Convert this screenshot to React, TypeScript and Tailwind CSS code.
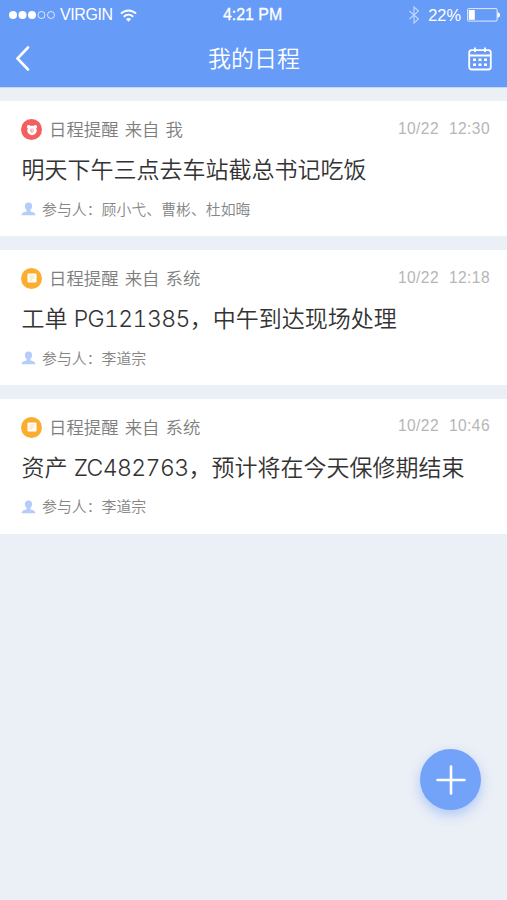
import clsx from 'clsx';

type Schedule = {
  id: number;
  kind: 'alarm' | 'order';
  from: string;
  date: string;
  time: string;
  title: string;
  code?: string;
  detail?: string;
  members: string;
};

const schedules: Schedule[] = [
  {
    id: 1,
    kind: 'alarm',
    from: '我',
    date: '10/22',
    time: '12:30',
    title: '明天下午三点去车站截总书记吃饭',
    members: '顾小弋、曹彬、杜如晦',
  },
  {
    id: 2,
    kind: 'order',
    from: '系统',
    date: '10/22',
    time: '12:18',
    title: '工单 ',
    code: 'PG121385',
    detail: '，中午到达现场处理',
    members: '李道宗',
  },
  {
    id: 3,
    kind: 'order',
    from: '系统',
    date: '10/22',
    time: '10:46',
    title: '资产 ',
    code: 'ZC482763',
    detail: '，预计将在今天保修期结束',
    members: '李道宗',
  },
];

function StatusBar() {
  return (
    <div className="relative flex h-[30px] items-center justify-between pl-[9px] pr-[7px] font-['Liberation_Sans',sans-serif] text-[16px]">
      <div className="flex items-center">
        <svg width="47" height="10" viewBox="0 0 47 10" fill="#fff">
          <circle cx="4" cy="5" r="4" />
          <circle cx="13.5" cy="5" r="4" />
          <circle cx="23" cy="5" r="4" />
          <g fill="none" stroke="#fff" strokeOpacity="0.75">
            <circle cx="32.5" cy="5" r="3.5" />
            <circle cx="42" cy="5" r="3.5" />
          </g>
        </svg>
        <span className="ml-1 w-[54px] whitespace-nowrap text-[16px] tracking-[-0.4px]">VIRGIN</span>
        <svg className="ml-[6px]" width="17" height="13" viewBox="0 0 18 13" fill="none" stroke="#fff" strokeWidth="2">
          <path d="M1 4.6C5.5 0 12.5 0 17 4.6" />
          <path d="M4 7.8C7 5 11 5 14 7.8" />
          <path d="M6.2 10.3C8 8.9 10 8.9 11.8 10.3L9 13z" fill="#fff" stroke="none" />
        </svg>
      </div>
      <span className="absolute left-[223px] top-[6px] text-[15.9px] leading-[18px] [-webkit-text-stroke:0.3px_white]">
        4:21 PM
      </span>
      <div className="flex items-center">
        <svg width="12" height="18" viewBox="0 0 12 18" fill="none" stroke="#fff" strokeOpacity="0.6" strokeWidth="1.1">
          <path d="M1.5 5L10.5 13L6 17V1L10.5 5L1.5 13" />
        </svg>
        <span className="ml-[8px] text-[16.4px]">22%</span>
        <svg className="ml-[6px]" width="33" height="14" viewBox="0 0 33 14">
          <rect x="0.6" y="0.6" width="29.5" height="12.5" rx="1" fill="none" stroke="#fff" strokeOpacity="0.8" />
          <rect x="1.8" y="2" width="6" height="9.8" fill="#fff" />
          <path d="M30.5 4C34 5.5 34 8.5 30.5 10z" fill="#fff" />
        </svg>
      </div>
    </div>
  );
}

function CalendarIcon() {
  return (
    <svg width="24" height="24" viewBox="0 0 24 24" fill="none" stroke="#fff" strokeWidth="1.8">
      <rect x="1.2" y="3.2" width="21.6" height="19.3" rx="2.5" />
      <path d="M1.2 8.5H22.8M7 0.5V5M17 0.5V5" />
      <g fill="#fff" stroke="none">
        <path d="M5 11.5h3v2.5h-3zM10.5 11.5h3v2.5h-3zM16 11.5h3v2.5h-3z" />
        <path d="M5 16.5h3v2.5h-3zM10.5 16.5h3v2.5h-3zM16 16.5h3v2.5h-3z" />
      </g>
    </svg>
  );
}

function KindIcon({ kind }: { kind: Schedule['kind'] }) {
  return (
    <div
      className={clsx(
        'flex size-[21px] items-center justify-center rounded-full',
        kind === 'alarm' ? 'bg-[#f45e5f]' : 'bg-[#fbad30]',
      )}
    >
      {kind === 'alarm' ? (
        <svg width="12" height="12" viewBox="0 0 12 12">
          <circle cx="6" cy="6.5" r="4.7" fill="#fff" />
          <circle cx="2.8" cy="2.8" r="1.9" fill="#fff" />
          <circle cx="9.2" cy="2.8" r="1.9" fill="#fff" />
          <circle cx="6" cy="6.5" r="1.9" fill="#f9a5a2" />
          <path d="M6 5V6.7H7.5" fill="none" stroke="#fff" strokeWidth="0.8" />
        </svg>
      ) : (
        <svg width="10" height="10" viewBox="0 0 10 10">
          <rect x="0.5" y="0.5" width="9" height="9" rx="1" fill="#fff" />
          <path d="M2.5 3H7.5M2.5 5H7.5M2.5 7H5" stroke="#fcd08a" strokeWidth="0.8" />
        </svg>
      )}
    </div>
  );
}

function ScheduleCard({ item }: { item: Schedule }) {
  return (
    <div className="h-[135px] bg-white pl-[21px] pr-[17px] pt-[16px]">
      <div className="flex h-[25px] items-center">
        <KindIcon kind={item.kind} />
        <span className="ml-[7px] mt-px text-[17.4px] [word-spacing:1.2px] text-[#7d7d7d]">
          日程提醒 来自 {item.from}
        </span>
        <span className="ml-auto flex gap-[10px] pb-[2px] font-['Liberation_Sans',sans-serif] text-[15.6px] tracking-[0.4px] text-[#b6b6b6]">
          <span>{item.date}</span>
          <span>{item.time}</span>
        </span>
      </div>
      <div className="mt-[10px] h-[36px] whitespace-nowrap pl-[0.5px] text-[23px] leading-[37px] tabular-nums text-[#333]">
        {item.title}
        {item.code && <span className="tracking-[-0.6px]">{item.code}</span>}
        {item.detail}
      </div>
      <div className="mt-[11px] flex h-[22px] items-center">
        <svg className="mb-[2px]" width="15" height="14" viewBox="0 0 14 14" preserveAspectRatio="none" fill="#b5cdfb">
          <path d="M7 .5C4.8 .5 3.5 2 3.6 4.2C3.7 6.2 4.6 7.3 5.3 8V9.2C4.5 10 .5 10 .5 13.3H13.5C13.5 10 9.5 10 8.7 9.2V8C9.4 7.3 10.3 6.2 10.4 4.2C10.5 2 9.2 .5 7 .5z" />
        </svg>
        <span className="ml-[6px] text-[14.9px] text-[#858585]">参与人：{item.members}</span>
      </div>
    </div>
  );
}

export default function App() {
  return (
    <div className="relative flex h-[900px] w-[507px] flex-col overflow-hidden bg-[#ebeff6] font-['Inter','Noto_Sans_CJK_SC',sans-serif] font-[350]">
      <header className="h-[88px] border-b border-[#c5d9fb] bg-[#679bf8] text-white">
        <StatusBar />
        <div className="flex h-[57px] items-center justify-between px-[15px]">
          <svg width="16" height="26" viewBox="0 0 16 26" fill="none" stroke="#fff" strokeWidth="2.6" strokeLinecap="round">
            <path d="M13 1.5L2.5 12.5L13 23.5" />
          </svg>
          <h1 className="ml-[9px] mt-[2px] text-[23px] leading-none">我的日程</h1>
          <CalendarIcon />
        </div>
      </header>

      <main className="flex flex-col gap-[13.8px] pt-[13px]">
        {schedules.map((item) => (
          <ScheduleCard key={item.id} item={item} />
        ))}
      </main>

      {/* Floating add button */}
      <button className="absolute left-[420px] top-[749px] flex size-[61px] items-center justify-center rounded-full bg-[#72a3f8] shadow-[0_5px_12px_rgba(103,155,248,0.45)]">
        <svg width="30" height="30" viewBox="0 0 30 30" stroke="#fff" strokeWidth="2.6" strokeLinecap="round">
          <path d="M1.5 15H28.5M15 1.5V28.5" />
        </svg>
      </button>
    </div>
  );
}
